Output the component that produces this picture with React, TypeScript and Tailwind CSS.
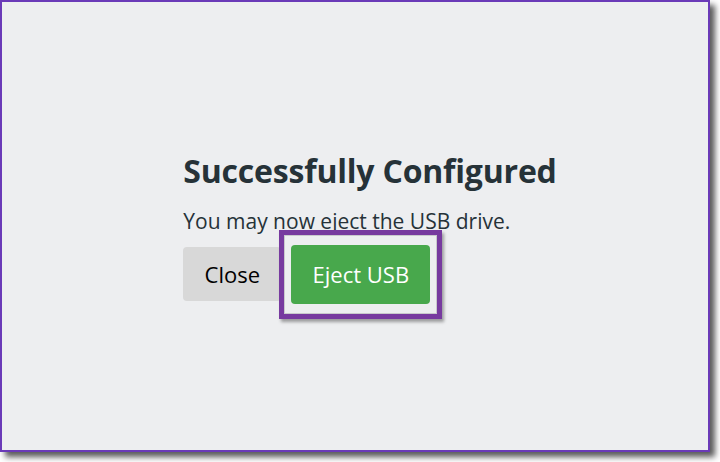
import React from "react";

export default function App() {
  return (
    <div className="w-[720px] h-[462px] bg-white" style={{ fontFamily: '"Open Sans", "Noto Sans", sans-serif' }}>
      <div className="w-[710px] h-[452px] border-2 border-[#6a3ab8] bg-[#edeef0] shadow-[5px_5px_6px_rgba(0,0,0,0.65)] flex items-center justify-center">
        <div className="flex flex-col pl-[30px] pt-[2px]">
          <h1 className="text-[32px] leading-[40px] font-bold text-[#263238] tracking-[-0.2px]">Successfully Configured</h1>
          <p className="mt-[16px] text-[21px] leading-[28px] text-[#263238]">You may now eject the USB drive.</p>
          <div className="mt-[10px] flex items-center">
            <button className="h-[54px] w-[98px] rounded-[4px] bg-[#d8d8d8] text-[22px] text-black">Close</button>
            <div className="relative ml-[10px]">
              <div className="absolute left-[-12px] top-[-15px] w-[163px] h-[89px] border-[5px] border-[#773a9f] shadow-[2px_3px_3px_rgba(0,0,0,0.35)]">
                <div className="w-full h-full border border-[#c9c9cc] bg-[#edeef0]" />
              </div>
              <button className="relative h-[59px] w-[139px] rounded-[4px] bg-[#48a84c] text-[22px] text-white">Eject USB</button>
            </div>
          </div>
        </div>
      </div>
    </div>
  );
}
